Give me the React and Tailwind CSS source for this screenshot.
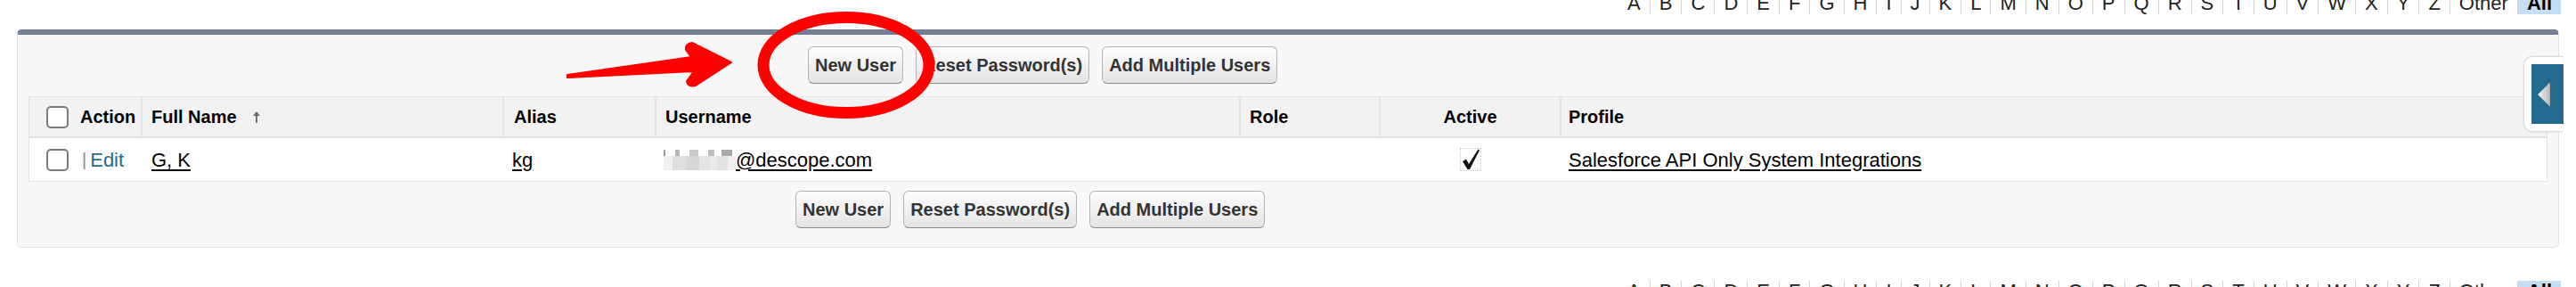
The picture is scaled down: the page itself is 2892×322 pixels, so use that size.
import React from "react";

const LETTERS = "ABCDEFGHIJKLMNOPQRSTUVWXYZ".split("");

function Rolodex({ className }) {
  return (
    <div className={"flex justify-end pr-[17px] h-[24px] " + className}>
      {LETTERS.map((l, i) => (
        <span
          key={l}
          className={
            "px-[10px] text-[22px] leading-[24px] text-[#222] " +
            (i > 0 ? "border-l border-[#d4d4d4]" : "")
          }
        >
          {l}
        </span>
      ))}
      <span className="px-[10px] text-[22px] leading-[24px] text-[#222] border-l border-[#d4d4d4]">
        Other
      </span>
      <span className="px-[10px] text-[22px] leading-[24px] font-bold text-black bg-[#c6ddf6] border-l border-[#d4d4d4]">
        All
      </span>
    </div>
  );
}

function Btn({ children }) {
  return (
    <button className="h-[42px] px-[7px] rounded-[6px] border border-[#b3b3b3] border-b-[#8c8c8c] bg-gradient-to-b from-[#fdfdfd] to-[#e4e4e4] text-[20px] font-bold text-[#333] leading-none flex items-center">
      {children}
    </button>
  );
}

function Buttons({ className }) {
  return (
    <div className={"flex gap-[14px] " + className}>
      <Btn>New User</Btn>
      <Btn>Reset Password(s)</Btn>
      <Btn>Add Multiple Users</Btn>
    </div>
  );
}

function Checkbox() {
  return (
    <span className="inline-block w-[25px] h-[25px] rounded-[5px] border-2 border-[#7a7a7a] bg-white shrink-0" />
  );
}

const COLS =
  "grid grid-cols-[125px_406px_171px_656px_157px_203px_1fr]";

function Header() {
  const th = "flex items-center h-full text-[20px] font-bold text-black";
  return (
    <div className={COLS + " h-[46px] bg-[#f2f2f2] border-b-2 border-[#e2e2e2]"}>
      <div className={th + " pl-[19px] gap-[13px]"}>
        <Checkbox />
        <span>Action</span>
      </div>
      <div className={th + " pl-[10px] border-l-2 border-[#e4e4e4]"}>
        <span>Full Name</span>
        <svg width="8" height="13" viewBox="0 0 8 13" className="ml-[18px]">
          <path d="M4 0 L8 5 L5 5 L5 13 L3 13 L3 5 L0 5 Z" fill="#6f6f6f" />
        </svg>
      </div>
      <div className={th + " pl-[11px] border-l-2 border-[#e4e4e4]"}>Alias</div>
      <div className={th + " pl-[10px] border-l-2 border-[#e4e4e4]"}>Username</div>
      <div className={th + " pl-[10px] border-l-2 border-[#e4e4e4]"}>Role</div>
      <div className={th + " justify-center border-l-2 border-[#e4e4e4]"}>Active</div>
      <div className={th + " pl-[8px] border-l-2 border-[#e4e4e4]"}>Profile</div>
    </div>
  );
}

function Blurred() {
  return (
    <span className="inline-flex flex-col w-[81px] h-[23px]">
      <span className="flex h-[7px]">
        <span className="w-[2px] bg-[#9a9a9a]" />
        <span className="w-[11px]" />
        <span className="w-[5px] bg-[#b5b5b5]" />
        <span className="w-[11px]" />
        <span className="w-[10px] bg-[#c8c8c8]" />
        <span className="w-[11px]" />
        <span className="w-[7px] bg-[#bdbdbd]" />
        <span className="w-[8px]" />
        <span className="w-[12px] bg-[#a8a8a8]" />
      </span>
      <span className="flex h-[16px]">
        <span className="w-[10px] bg-[#f1f1f1]" />
        <span className="w-[16px] bg-[#dedede]" />
        <span className="w-[14px] bg-[#d6d6d6]" />
        <span className="w-[12px] bg-[#e4e4e4]" />
        <span className="w-[8px] bg-[#ebebeb]" />
        <span className="w-[12px] bg-[#e2e2e2]" />
        <span className="w-[9px] bg-[#efefef]" />
      </span>
    </span>
  );
}

function Row() {
  const td = "flex items-center h-full text-[22px] text-black";
  return (
    <div className={COLS + " h-[49px] bg-white border-b border-[#e2e2e2]"}>
      <div className={td + " pl-[19px]"}>
        <Checkbox />
        <span className="ml-[15px] text-[#8a8a8a] text-[20px]">|</span>
        <span className="ml-[4px] text-[#1f6a8e]">Edit</span>
      </div>
      <div className={td + " pl-[12px]"}>
        <span className="underline underline-offset-[3px]">G, K</span>
      </div>
      <div className={td + " pl-[11px]"}>
        <span className="underline underline-offset-[3px]">kg</span>
      </div>
      <div className={td + " pl-[10px]"}>
        <Blurred />
        <span className="underline underline-offset-[3px]">@descope.com</span>
      </div>
      <div className={td} />
      <div className={td + " justify-center"}>
        <span className="w-[24px] h-[26px] border border-dotted border-[#c8c8c8] flex items-center justify-center ml-[2px]">
          <svg width="22" height="26" viewBox="0 0 22 26">
            <path
              d="M2 15 L6 12.5 L9 18 L19.5 1.5 L21 2.5 L10 24 L7.5 24 Z"
              fill="#111"
            />
          </svg>
        </span>
      </div>
      <div className={td + " pl-[10px]"}>
        <span className="underline underline-offset-[3px]">
          Salesforce API Only System Integrations
        </span>
      </div>
    </div>
  );
}

export default function App() {
  return (
    <div className="relative w-[2892px] h-[322px] overflow-hidden bg-white font-['Liberation_Sans',Arial,sans-serif]">
      <Rolodex className="-mt-[8px]" />

      <div className="mt-[17px] mx-[19px] bg-[#f8f8f8] border border-[#e2e2e2] border-t-[6px] border-t-[#747e96] rounded-[5px] pt-[13px] pb-[21px]">
        <Buttons className="pl-[887px]" />
        <div className="mt-[14px] mx-[12px] border border-[#e2e2e2] border-b-0">
          <Header />
          <Row />
        </div>
        <Buttons className="pl-[873px] mt-[10px]" />
      </div>

      <Rolodex className="mt-[37px]" />

      {/* side tab */}
      <div className="absolute left-[2833px] top-[63px] w-[44px] h-[85px] bg-white border border-[#dcdcdc] border-r-0 rounded-l-[10px] shadow-[0_0_2px_rgba(0,0,0,0.15)] pl-[8px] pt-[8px]">
        <div className="w-[36px] h-[67px] bg-[#236b8e] flex items-center pl-[7px]">
          <svg width="15" height="28" viewBox="0 0 15 28">
            <defs>
              <linearGradient id="tri" x1="0" y1="0" x2="1" y2="0">
                <stop offset="0" stopColor="#f4f4f4" />
                <stop offset="1" stopColor="#b8b8b8" />
              </linearGradient>
            </defs>
            <polygon points="14,0 0,14 14,28" fill="url(#tri)" stroke="#555" strokeWidth="0.6" strokeDasharray="1 1" />
          </svg>
        </div>
      </div>

      {/* red annotations */}
      <svg
        className="absolute inset-0 pointer-events-none"
        width="2892"
        height="322"
        viewBox="0 0 2892 322"
      >
        <ellipse
          cx="950"
          cy="73"
          rx="93"
          ry="53.5"
          fill="none"
          stroke="#ff0000"
          strokeWidth="13"
        />
        <path
          d="M637 84 L776 64 L770 56 Q769 49 777 48 L821 70 L781 96 Q772 98 771 91 L779 80 L637 87 Z"
          fill="#ff0000"
          stroke="#ff0000"
          strokeWidth="2"
          strokeLinejoin="round"
        />
      </svg>
    </div>
  );
}
